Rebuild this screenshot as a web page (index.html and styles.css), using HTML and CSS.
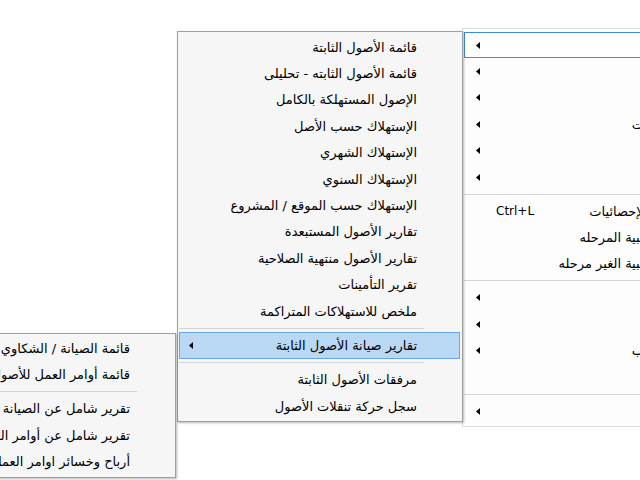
FILE: index.html
```html
<!DOCTYPE html>
<html lang="ar" dir="rtl">
<head>
<meta charset="utf-8">
<title>Menus</title>
<link rel="stylesheet" href="styles.css">
</head>
<body>
<div class="menu m1">
  <div class="item focus"><span class="label">الحسابات</span><span class="slot"><svg class="arrow" width="4" height="7" viewBox="0 0 4 7"><polygon points="0,3.5 4,0 4,7"/></svg></span></div>
  <div class="item"><span class="label">المبيعات</span><span class="slot"><svg class="arrow" width="4" height="7" viewBox="0 0 4 7"><polygon points="0,3.5 4,0 4,7"/></svg></span></div>
  <div class="item"><span class="label">المشتريات</span><span class="slot"><svg class="arrow" width="4" height="7" viewBox="0 0 4 7"><polygon points="0,3.5 4,0 4,7"/></svg></span></div>
  <div class="item"><span class="label">تقارير العمليات</span><span class="slot"><svg class="arrow" width="4" height="7" viewBox="0 0 4 7"><polygon points="0,3.5 4,0 4,7"/></svg></span></div>
  <div class="item"><span class="label">المخازن</span><span class="slot"><svg class="arrow" width="4" height="7" viewBox="0 0 4 7"><polygon points="0,3.5 4,0 4,7"/></svg></span></div>
  <div class="item"><span class="label">الأصول</span><span class="slot"><svg class="arrow" width="4" height="7" viewBox="0 0 4 7"><polygon points="0,3.5 4,0 4,7"/></svg></span></div>
  <div class="sep"></div>
  <div class="item"><span class="label">لوحة متابعة الإحصائيات</span><span class="key">Ctrl+L</span><span class="slot"></span></div>
  <div class="item"><span class="label">القيود المحاسبية المرحله</span><span class="slot"></span></div>
  <div class="item"><span class="label">القيود المحاسبية الغير مرحله</span><span class="slot"></span></div>
  <div class="sep"></div>
  <div class="item"><span class="label">الموظفين</span><span class="slot"><svg class="arrow" width="4" height="7" viewBox="0 0 4 7"><polygon points="0,3.5 4,0 4,7"/></svg></span></div>
  <div class="item"><span class="label">الرواتب</span><span class="slot"><svg class="arrow" width="4" height="7" viewBox="0 0 4 7"><polygon points="0,3.5 4,0 4,7"/></svg></span></div>
  <div class="item"><span class="label">تقارير الضرائب</span><span class="slot"><svg class="arrow" width="4" height="7" viewBox="0 0 4 7"><polygon points="0,3.5 4,0 4,7"/></svg></span></div>
  <div class="item"><span class="label">حول</span><span class="slot"></span></div>
  <div class="sep"></div>
  <div class="item"><span class="label">أدوات</span><span class="slot"><svg class="arrow" width="4" height="7" viewBox="0 0 4 7"><polygon points="0,3.5 4,0 4,7"/></svg></span></div>
</div>

<div class="menu m2">
  <div class="item"><span class="label">قائمة الأصول الثابتة</span><span class="slot"></span></div>
  <div class="item"><span class="label">قائمة الأصول الثابته - تحليلى</span><span class="slot"></span></div>
  <div class="item"><span class="label">الإصول المستهلكة بالكامل</span><span class="slot"></span></div>
  <div class="item"><span class="label">الإستهلاك حسب الأصل</span><span class="slot"></span></div>
  <div class="item"><span class="label">الإستهلاك الشهري</span><span class="slot"></span></div>
  <div class="item"><span class="label">الإستهلاك السنوي</span><span class="slot"></span></div>
  <div class="item"><span class="label">الإستهلاك حسب الموقع / المشروع</span><span class="slot"></span></div>
  <div class="item"><span class="label">تقارير الأصول المستبعدة</span><span class="slot"></span></div>
  <div class="item"><span class="label">تقارير الأصول منتهية الصلاحية</span><span class="slot"></span></div>
  <div class="item"><span class="label">تقرير التأمينات</span><span class="slot"></span></div>
  <div class="item"><span class="label">ملخص للاستهلاكات المتراكمة</span><span class="slot"></span></div>
  <div class="sep"></div>
  <div class="item hot"><span class="label">تقارير صيانة الأصول الثابتة</span><span class="slot"><svg class="arrow" width="4" height="7" viewBox="0 0 4 7"><polygon points="0,3.5 4,0 4,7"/></svg></span></div>
  <div class="sep"></div>
  <div class="item"><span class="label">مرفقات الأصول الثابتة</span><span class="slot"></span></div>
  <div class="item"><span class="label">سجل حركة تنقلات الأصول</span><span class="slot"></span></div>
</div>

<div class="menu m3">
  <div class="item"><span class="label">قائمة الصيانة / الشكاوي</span><span class="slot"></span></div>
  <div class="item"><span class="label">قائمة أوامر العمل للأصول</span><span class="slot"></span></div>
  <div class="sep"></div>
  <div class="item"><span class="label">تقرير شامل عن الصيانة 'للأصول'</span><span class="slot"></span></div>
  <div class="item"><span class="label">تقرير شامل عن أوامر العمل</span><span class="slot"></span></div>
  <div class="item"><span class="label">أرباح وخسائر اوامر العمل</span><span class="slot"></span></div>
</div>
</body>
</html>
```

FILE: styles.css
```css
* {
  box-sizing: border-box;
  margin: 0;
  padding: 0;
}

html, body {
  width: 640px;
  height: 480px;
  overflow: hidden;
  background: #ffffff;
}

body {
  position: relative;
  font-family: Tahoma, "DejaVu Sans", sans-serif;
  font-size: 13px;
  color: #000000;
}

.menu {
  position: absolute;
  direction: rtl;
  display: flex;
  flex-direction: column;
  background: #f6f6f6;
  border: 1px solid #a0a0a0;
  box-shadow: 1px 1px 2px rgba(0, 0, 0, 0.28);
  padding: 2px 2px 2px 1px;
  --sep: 8px;
  --arrow-pad: 9px;
}

.m1 {
  left: 462px;
  top: 28px;
  width: 297px;
  padding-top: 3px;
  background: #fdfdfd;
  border-color: #dcdcdc;
  box-shadow: none;
  --sep: 7.6px;
  --arrow-pad: 11px;
  z-index: 1;
}

.m2 {
  left: 177px;
  top: 31px;
  width: 286px;
  z-index: 2;
}

.m3 {
  left: -130px;
  top: 333px;
  width: 306px;
  padding-top: 1px;
  z-index: 3;
}

.item {
  height: 26.4px;
  display: flex;
  align-items: center;
  border: 1px solid transparent;
  padding-right: 42px;
  white-space: nowrap;
}

.item.hot {
  background: #b9d8f4;
  border-color: #66a6e3;
}

.item.focus {
  background: #ffffff;
  border-color: #3d8ee0;
}

.label {
  flex: 1;
  text-align: right;
}

.key {
  direction: ltr;
  flex: none;
  font-size: 12px;
}

.slot {
  direction: ltr;
  flex: none;
  width: 31px;
  height: 100%;
  display: flex;
  align-items: center;
  padding-left: var(--arrow-pad);
}

.arrow {
  display: block;
  fill: #000000;
}

.sep {
  height: var(--sep);
  flex: none;
  display: flex;
  align-items: center;
  padding: 0 36px 0 0;
}

.sep::before {
  content: "";
  flex: 1;
  height: 1px;
  background: #d4d4d4;
}
```
